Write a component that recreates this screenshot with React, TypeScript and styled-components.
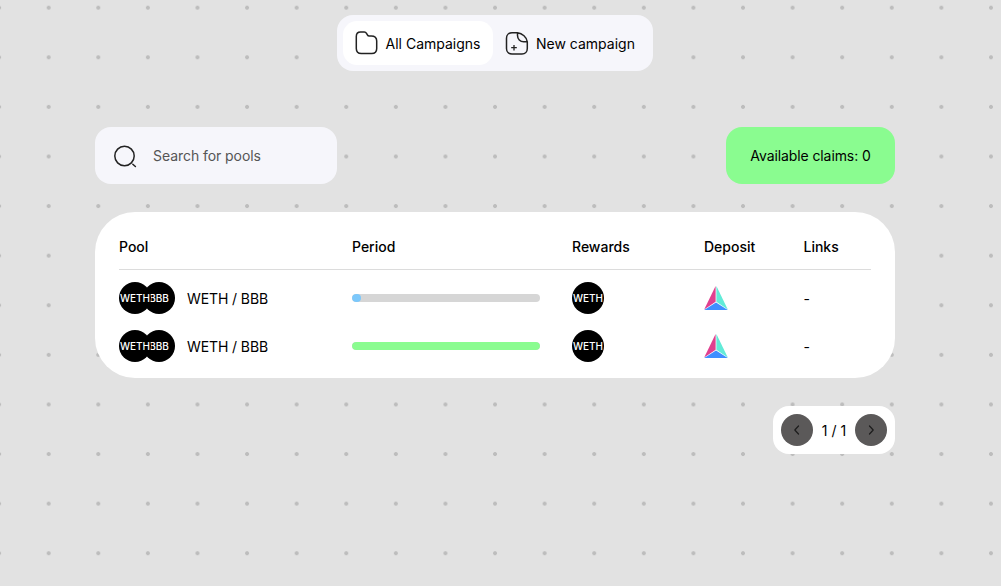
import React from 'react';
import styled, { createGlobalStyle } from 'styled-components';

const GlobalStyle = createGlobalStyle`
  html, body {
    margin: 0;
    padding: 0;
    height: 100%;
  }
  body {
    font-family: Inter, "Noto Sans", sans-serif;
    color: #000;
    background-color: #e2e2e2;
    background-image: radial-gradient(circle at center, #bdbdbd 0, #bdbdbd 1.6px, transparent 2.3px);
    background-size: 49.6px 49.6px;
    background-position: 23.9px -17.1px;
    overflow: hidden;
  }
`;

const Page = styled.div`
  width: 800px;
  margin-left: 95px;
  padding-top: 15px;
`;

const Nav = styled.nav`
  display: flex;
  width: fit-content;
  margin: 0 auto;
  padding: 6px;
  background: #f6f6fb;
  border-radius: 16px;
`;

const NavItem = styled.a<{ $active?: boolean }>`
  display: flex;
  align-items: center;
  gap: 7px;
  height: 44px;
  padding: 0 12.5px 0 12px;
  border-radius: 14px;
  font-size: 14px;
  line-height: 20px;
  background: ${(p) => (p.$active ? '#fff' : 'transparent')};
`;

const NavLabel = styled.span`
  padding-top: 2px;
`;

const Toolbar = styled.div`
  display: flex;
  justify-content: space-between;
  margin-top: 56px;
`;

const SearchBox = styled.div`
  display: flex;
  align-items: center;
  gap: 16px;
  box-sizing: border-box;
  width: 242px;
  height: 57px;
  padding: 0 18px;
  background: #f6f6fb;
  border-radius: 16px;
`;

const SearchInput = styled.input`
  flex: 1;
  min-width: 0;
  border: none;
  outline: none;
  padding: 0;
  background: transparent;
  font-family: inherit;
  font-size: 14px;
  letter-spacing: -0.06px;
  color: #000;
  &::placeholder {
    color: #555;
    opacity: 1;
  }
`;

const ClaimsBadge = styled.div`
  display: flex;
  align-items: center;
  justify-content: center;
  width: 169px;
  height: 57px;
  font-size: 14px;
  letter-spacing: -0.1px;
  background: #8afc90;
  border-radius: 16px;
`;

const TableCard = styled.section`
  margin-top: 28px;
  padding: 24px 24px 16px;
  background: #fff;
  border-radius: 40px;
`;

const columns = '233px 220px 132px 99.5px 1fr';

const HeaderRow = styled.div`
  display: grid;
  grid-template-columns: ${columns};
  height: 34px;
  padding-top: 1px;
  box-sizing: border-box;
  border-bottom: 1px solid #dcdcdc;
  font-size: 14px;
  font-weight: 500;
  line-height: 20px;
`;

const Row = styled.div`
  display: grid;
  grid-template-columns: ${columns};
  align-items: center;
  height: 32px;
  margin-top: 16px;
  font-size: 14px;
  line-height: 20px;
  ${HeaderRow} + & {
    margin-top: 12px;
  }
`;

const PoolCell = styled.div`
  display: flex;
  align-items: center;
  gap: 12px;
`;

const PoolName = styled.span`
  padding-top: 2px;
  letter-spacing: -0.1px;
`;

const LinkCell = styled.div`
  padding-top: 2px;
`;

const TokenPair = styled.div`
  display: flex;
`;

const Token = styled.div<{ $top?: boolean }>`
  position: relative;
  z-index: ${(p) => (p.$top ? 1 : 0)};
  display: flex;
  align-items: center;
  justify-content: center;
  flex: none;
  width: 32px;
  height: 32px;
  overflow: hidden;
  border-radius: 50%;
  background: #000;
  color: #fff;
  font-size: 10px;
  font-weight: 500;
  line-height: 12px;
  & + & {
    margin-left: -8px;
  }
`;

const Track = styled.div`
  width: 188px;
  height: 8px;
  overflow: hidden;
  border-radius: 4px;
  background: #d6d6d6;
`;

const Fill = styled.div<{ $color: string }>`
  height: 100%;
  border-radius: 4px;
  background: ${(p) => p.$color};
`;

const Pager = styled.div`
  display: flex;
  align-items: center;
  justify-content: space-between;
  box-sizing: border-box;
  width: 122px;
  height: 48px;
  margin: 28px 0 0 auto;
  padding: 0 8px;
  background: #fff;
  border-radius: 16px;
  font-size: 14px;
`;

const PagerButton = styled.button`
  display: flex;
  align-items: center;
  justify-content: center;
  width: 32px;
  height: 32px;
  padding: 0;
  border: none;
  border-radius: 50%;
  background: #5b5959;
  color: #1c1c1c;
`;

const FolderIcon = () => (
  <svg width="24" height="24" viewBox="0 0 24 24" fill="none" stroke="#222" strokeWidth="1.5">
    <path d="M1.3 5.5c0-2.6 1.700-4.500 4.200-4.500h3.800c1 0 1.700.4 2.200 1.300l.9 1.600c.4.8 1 1.100 1.900 1.100h1.900c3.400 0 5.500 2 5.500 5v7.500c0 3.200-2.100 5-5 5H6.300c-3 0-5-1.900-5-5z" />
  </svg>
);

const NoteIcon = () => (
  <svg width="24" height="24" viewBox="0 0 24 24" fill="none" stroke="#222" strokeWidth="1.5" strokeLinejoin="round">
    <path d="M12.500 1.800H7C3.800 1.800 1.500 4 1.500 7.200v10.300c0 3.200 2.300 5.500 5.500 5.500h10c3.100 0 5.300-2.300 5.300-5.500v-6.700" />
    <path d="M12.500 1.800v2.700c0 3.500 2.700 6.300 6.200 6.300h3.600c-.6-4.500-5-8.500-9.800-9z" />
    <path d="M6.200 16.700h5.600M9 13.900v5.600" strokeWidth="1.300" />
  </svg>
);

const SearchIcon = () => (
  <svg width="24" height="24" viewBox="0 0 24 24" fill="none" stroke="#222" strokeWidth="1.5" strokeLinecap="round">
    <circle cx="11.500" cy="12" r="9.700" />
    <path d="M19.800 20.200l2.600 2.300" />
  </svg>
);

const PrismIcon = () => (
  <svg width="24" height="24" viewBox="0 0 24 24">
    <path d="M11.600 0L0.200 23.500l11.400-7.700z" fill="#e0408f" />
    <path d="M12.400 0L23.800 23.500l-11.400-7.700z" fill="#62ebd8" />
    <path d="M12 16.500L23.800 24H0.200z" fill="#3f8fff" />
  </svg>
);

const Chevron = ({ left }: { left?: boolean }) => (
  <svg width="12" height="12" viewBox="0 0 12 12" fill="none" stroke="currentColor" strokeWidth="1.200" strokeLinecap="round" strokeLinejoin="round">
    <path d={left ? 'M7.500 2L3.800 6l3.700 4' : 'M4.500 2L8.200 6l-3.700 4'} />
  </svg>
);

const pools = [
  { name: 'WETH / BBB', progress: 5, color: '#7cc8fb' },
  { name: 'WETH / BBB', progress: 100, color: '#8afc90' },
];

export default function App() {
  return (
    <Page>
      <GlobalStyle />
      <Nav>
        <NavItem $active>
          <FolderIcon />
          <NavLabel>All Campaigns</NavLabel>
        </NavItem>
        <NavItem>
          <NoteIcon />
          <NavLabel>New campaign</NavLabel>
        </NavItem>
      </Nav>
      <Toolbar>
        <SearchBox>
          <SearchIcon />
          <SearchInput placeholder="Search for pools" />
        </SearchBox>
        <ClaimsBadge>Available claims: 0</ClaimsBadge>
      </Toolbar>
      <TableCard>
        <HeaderRow>
          <div>Pool</div>
          <div>Period</div>
          <div>Rewards</div>
          <div>Deposit</div>
          <div>Links</div>
        </HeaderRow>
        {pools.map((pool, i) => (
          <Row key={i}>
            <PoolCell>
              <TokenPair>
                <Token $top>WETH</Token>
                <Token>BBB</Token>
              </TokenPair>
              <PoolName>{pool.name}</PoolName>
            </PoolCell>
            <Track>
              <Fill $color={pool.color} style={{ width: `${pool.progress}%` }} />
            </Track>
            <Token>WETH</Token>
            <PrismIcon />
            <LinkCell>-</LinkCell>
          </Row>
        ))}
      </TableCard>
      <Pager>
        <PagerButton>
          <Chevron left />
        </PagerButton>
        1 / 1
        <PagerButton>
          <Chevron />
        </PagerButton>
      </Pager>
    </Page>
  );
}
